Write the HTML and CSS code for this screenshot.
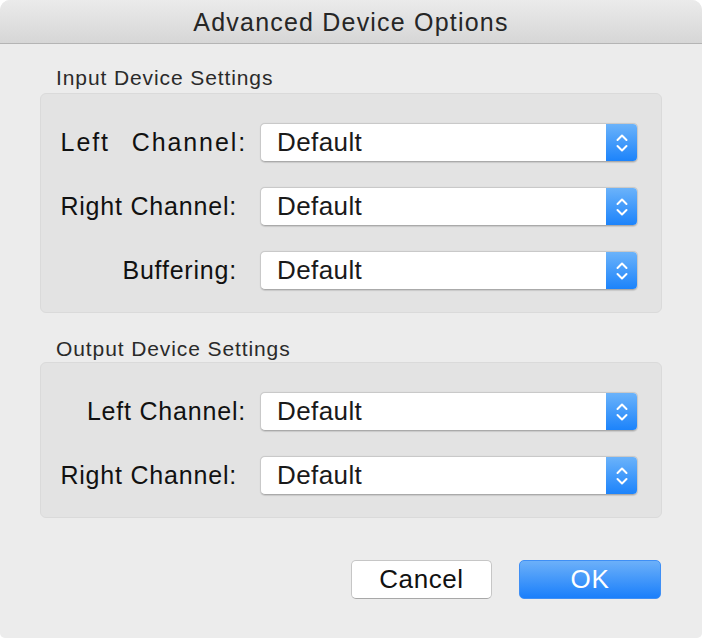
FILE: index.html
```html
<!DOCTYPE html>
<html>
<head>
<meta charset="utf-8">
<link rel="stylesheet" href="styles.css">
</head>
<body>
<div class="window">
  <div class="titlebar">Advanced Device Options</div>
  <div class="main">
    <div class="section-label first">Input Device Settings</div>
    <div class="group">
      <div class="label wide spaced">Left Channel:</div>
      <div class="popup"><span class="value">Default</span><span class="arrows"><svg width="14" height="22" viewBox="0 0 14 22"><path d="M2.5 8 L7 3.5 L11.5 8 M2.5 14 L7 18.5 L11.5 14" fill="none" stroke="#fff" stroke-width="2" stroke-linecap="round" stroke-linejoin="round"/></svg></span></div>
      <div class="label">Right Channel:</div>
      <div class="popup"><span class="value">Default</span><span class="arrows"><svg width="14" height="22" viewBox="0 0 14 22"><path d="M2.5 8 L7 3.5 L11.5 8 M2.5 14 L7 18.5 L11.5 14" fill="none" stroke="#fff" stroke-width="2" stroke-linecap="round" stroke-linejoin="round"/></svg></span></div>
      <div class="label">Buffering:</div>
      <div class="popup"><span class="value">Default</span><span class="arrows"><svg width="14" height="22" viewBox="0 0 14 22"><path d="M2.5 8 L7 3.5 L11.5 8 M2.5 14 L7 18.5 L11.5 14" fill="none" stroke="#fff" stroke-width="2" stroke-linecap="round" stroke-linejoin="round"/></svg></span></div>
    </div>
    <div class="section-label second">Output Device Settings</div>
    <div class="group">
      <div class="label wide">Left Channel:</div>
      <div class="popup"><span class="value">Default</span><span class="arrows"><svg width="14" height="22" viewBox="0 0 14 22"><path d="M2.5 8 L7 3.5 L11.5 8 M2.5 14 L7 18.5 L11.5 14" fill="none" stroke="#fff" stroke-width="2" stroke-linecap="round" stroke-linejoin="round"/></svg></span></div>
      <div class="label">Right Channel:</div>
      <div class="popup"><span class="value">Default</span><span class="arrows"><svg width="14" height="22" viewBox="0 0 14 22"><path d="M2.5 8 L7 3.5 L11.5 8 M2.5 14 L7 18.5 L11.5 14" fill="none" stroke="#fff" stroke-width="2" stroke-linecap="round" stroke-linejoin="round"/></svg></span></div>
    </div>
    <div class="buttons">
      <div class="btn cancel">Cancel</div>
      <div class="btn ok">OK</div>
    </div>
  </div>
</div>
</body>
</html>
```
FILE: styles.css
```css
html, body {
  margin: 0;
  padding: 0;
  background: #ffffff;
}
body {
  font-family: "Liberation Sans", Arial, sans-serif;
}
.window {
  width: 702px;
  height: 638px;
  background: #ececec;
  border-radius: 10px 10px 5px 5px;
  overflow: hidden;
  box-sizing: border-box;
}
.titlebar {
  height: 43px;
  border-bottom: 1px solid #b4b4b4;
  background: linear-gradient(#ebebeb, #d6d6d6);
  text-align: center;
  font-size: 25px;
  letter-spacing: 1.2px;
  line-height: 44px;
  color: #262626;
}
.main {
  padding: 0 40px 0 40px;
}
.section-label {
  font-size: 21px;
  letter-spacing: 0.9px;
  line-height: 22px;
  color: #2a2a2a;
  padding-left: 16px;
}
.section-label.first {
  padding-top: 23px;
  margin-bottom: 4px;
}
.section-label.second {
  padding-top: 25px;
  margin-bottom: 2px;
}
.group {
  background: #e3e3e3;
  border: 1px solid #dadada;
  border-radius: 6px;
  display: grid;
  grid-template-columns: 1fr 378px;
  row-gap: 25px;
  padding: 29px 23px 22px 0;
}
.label {
  font-size: 25px;
  letter-spacing: 0.8px;
  color: #111;
  text-align: right;
  align-self: center;
  padding-right: 23px;
  white-space: nowrap;
}
.label.wide {
  padding-right: 14px;
}
.label.spaced {
  letter-spacing: 1.9px;
  word-spacing: 13px;
  padding-right: 13px;
}
.popup {
  height: 39px;
  box-sizing: border-box;
  background: #fff;
  border: 1px solid #c9c9c9;
  border-bottom-color: #aaa;
  border-radius: 5px;
  display: flex;
  align-items: center;
  overflow: hidden;
  box-shadow: 0 0.5px 1px rgba(0,0,0,0.12);
}
.value {
  flex: 1;
  padding-left: 16px;
  font-size: 26px;
  letter-spacing: 0.4px;
  color: #1a1a1a;
}
.arrows {
  width: 32px;
  height: 39px;
  margin: -1px -1px -1px 0;
  background: linear-gradient(#6db4fa, #1a82fb);
  display: flex;
  align-items: center;
  justify-content: center;
}
.buttons {
  display: flex;
  justify-content: flex-end;
  gap: 27px;
  padding-top: 42px;
  padding-right: 1px;
}
.btn {
  width: 141px;
  height: 39px;
  box-sizing: border-box;
  border-radius: 5px;
  font-size: 26px;
  letter-spacing: 0.6px;
  display: flex;
  align-items: center;
  justify-content: center;
}
.cancel {
  background: #fff;
  border: 1px solid #c6c6c6;
  border-bottom-color: #a8a8a8;
  color: #111;
}
.ok {
  width: 142px;
  background: linear-gradient(#6cb0f9, #1a7ffb);
  border: 1px solid #3f8ff5;
  color: #fff;
}
```
